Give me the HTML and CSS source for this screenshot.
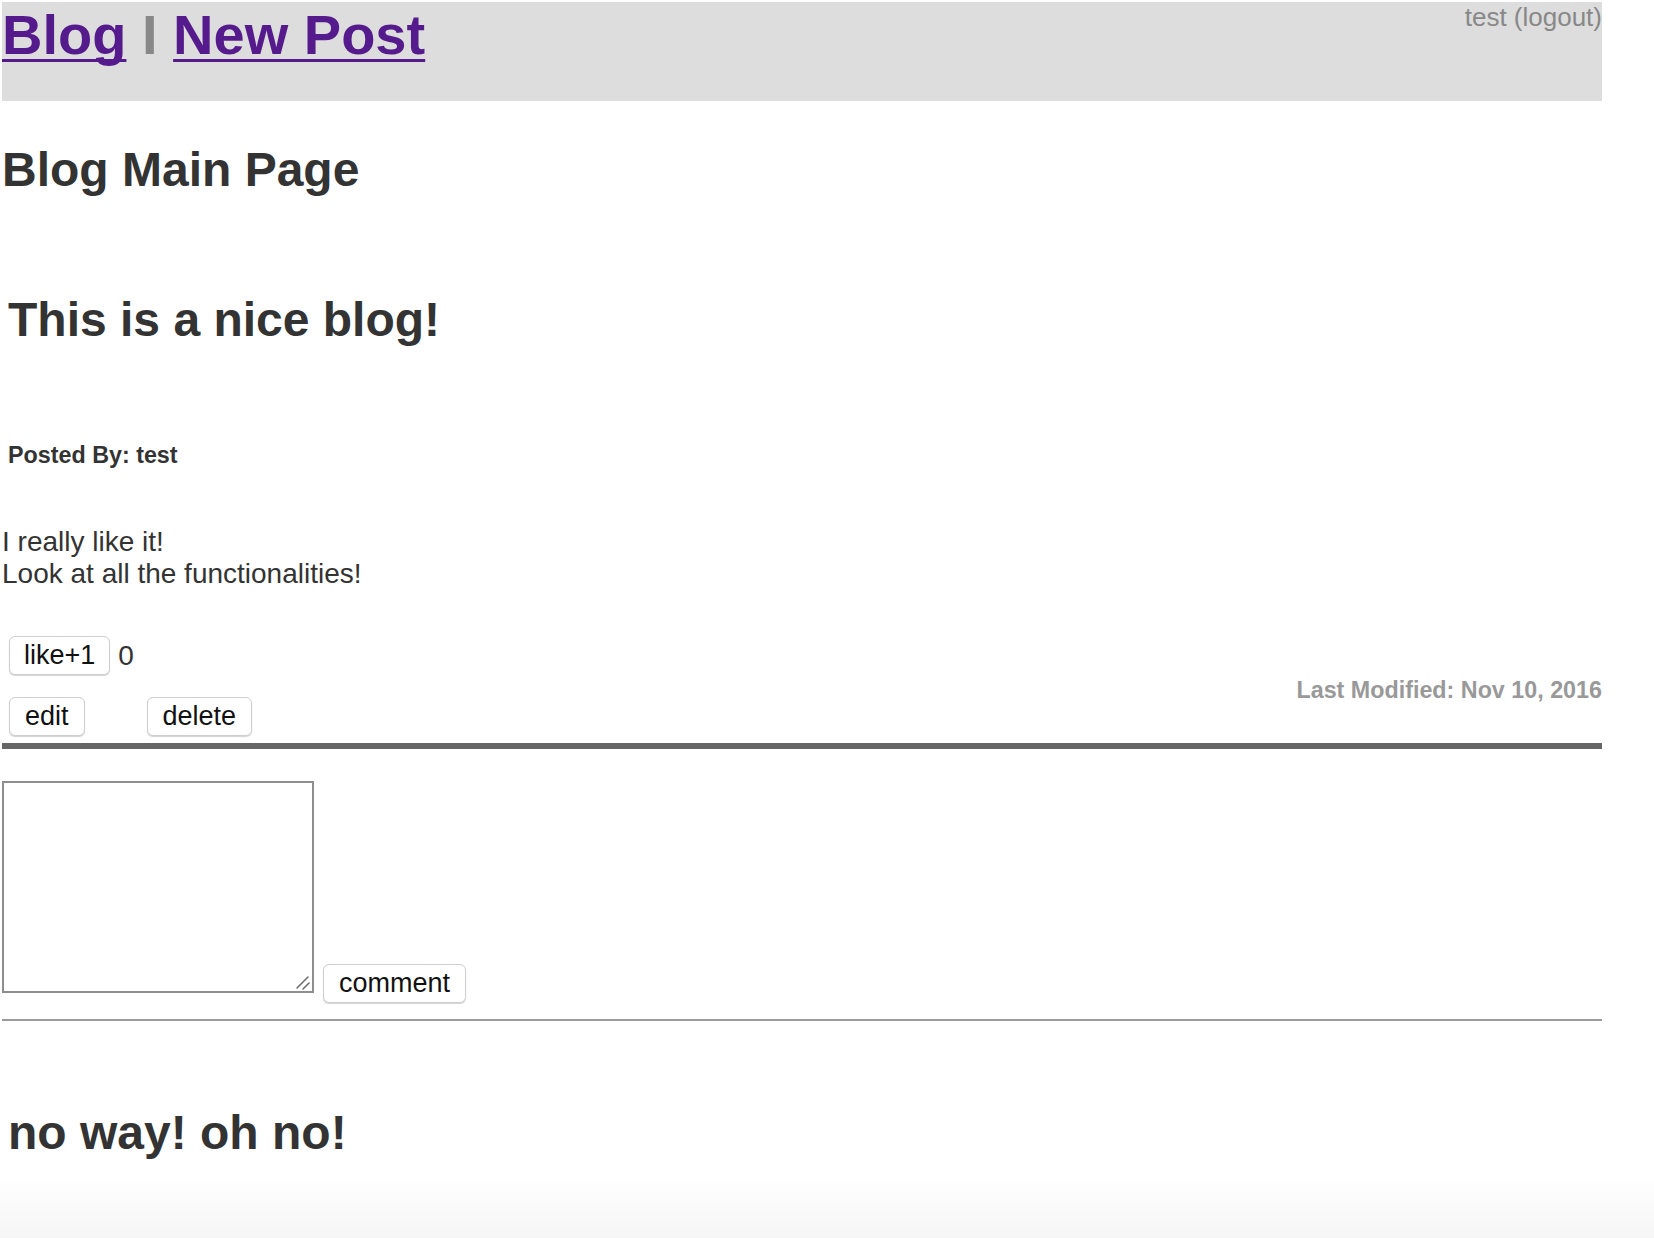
FILE: index.html
```html
<!DOCTYPE html>
<html lang="en">
<head>
<meta charset="utf-8">
<title>Blog Main Page</title>
<link rel="stylesheet" href="styles.css">
</head>
<body>
<div class="page">
  <header class="topbar">
    <h1 class="nav"><a href="#" class="nav-link">Blog</a> <span class="nav-sep">I</span> <a href="#" class="nav-link">New Post</a></h1>
    <div class="user">test (logout)</div>
  </header>

  <h2 class="page-title">Blog Main Page</h2>

  <article class="post">
    <h2 class="post-title">This is a nice blog!</h2>
    <div class="author">Posted By: test</div>
    <div class="post-body">I really like it!<br>Look at all the functionalities!</div>

    <div class="post-actions">
      <div class="action-col">
        <div class="like-row">
          <button class="btn">like+1</button>
          <span class="like-count">0</span>
        </div>
        <div class="edit-row">
          <button class="btn btn-edit">edit</button>
          <button class="btn btn-delete">delete</button>
        </div>
      </div>
      <div class="modified">Last Modified: Nov 10, 2016</div>
    </div>
    <div class="thick-rule"></div>

    <form class="comment-form">
      <div class="box-wrap">
        <textarea class="comment-box"></textarea>
        <svg class="grip" width="16" height="16" viewBox="0 0 16 16" aria-hidden="true">
          <line x1="2" y1="14" x2="13" y2="3" stroke="#6f6f6f" stroke-width="1.6" stroke-linecap="round"/>
          <line x1="8" y1="15" x2="14" y2="9" stroke="#6f6f6f" stroke-width="1.6" stroke-linecap="round"/>
        </svg>
      </div>
      <button type="button" class="btn btn-comment">comment</button>
    </form>
    <div class="thin-rule"></div>

    <h2 class="comment-title">no way! oh no!</h2>
  </article>
</div>
<div class="bottom-fade"></div>
</body>
</html>
```

FILE: styles.css
```css
html, body {
  margin: 0;
  padding: 0;
  background: #ffffff;
}

body {
  font-family: "Liberation Sans", Arial, Helvetica, sans-serif;
  color: #333333;
}

.page {
  width: 1600px;
  padding: 2px 0 0 2px;
}

.topbar {
  height: 99px;
  background: #dddddd;
  display: flex;
  justify-content: space-between;
  align-items: flex-start;
}

.nav {
  margin: 0;
  font-size: 56px;
  font-weight: 700;
  line-height: normal;
  color: #888888;
}

.nav-link {
  color: #551a8b;
  text-decoration: underline;
  text-decoration-thickness: 3px;
  text-underline-offset: 5px;
  text-decoration-skip-ink: none;
}

.nav-sep {
  color: #888888;
}

.user {
  font-size: 26px;
  line-height: normal;
  color: #888888;
}

.page-title,
.post-title,
.comment-title {
  font-size: 48px;
  font-weight: 700;
  line-height: 54px;
  color: #333333;
}

.page-title {
  margin: 42px 0 0 0;
}

.post-title {
  margin: 96px 0 0 0;
  padding-left: 6px;
}

.author {
  margin-top: 95px;
  padding-left: 6px;
  font-size: 23.3px;
  font-weight: 700;
  line-height: normal;
}

.post-body {
  margin-top: 57px;
  font-size: 28px;
  line-height: 32px;
}

.post-actions {
  margin-top: 46px;
  display: flex;
  justify-content: space-between;
  align-items: flex-start;
}

.action-col {
  display: flex;
  flex-direction: column;
  gap: 22px;
  padding-left: 7px;
}

.like-row {
  display: flex;
  align-items: center;
  gap: 8px;
}

.like-count {
  font-size: 28px;
  color: #333333;
}

.edit-row {
  display: flex;
  align-items: center;
  gap: 62px;
}

.btn {
  height: 39px;
  padding: 0 14px;
  font-family: "Liberation Sans", Arial, Helvetica, sans-serif;
  font-size: 27px;
  line-height: 37px;
  color: #111111;
  background: #ffffff;
  border: 1px solid #cfcfcf;
  border-radius: 6px;
  box-shadow: 0 1px 1px rgba(0, 0, 0, 0.18);
}

.btn-edit {
  padding: 0 15px;
}

.btn-delete {
  padding: 0 15px;
}

.modified {
  margin-top: 41px;
  font-size: 23.3px;
  font-weight: 700;
  line-height: normal;
  color: #999999;
}

.thick-rule {
  margin-top: 7px;
  height: 6px;
  background: #666666;
}

.comment-form {
  margin: 32px 0 0 0;
  display: flex;
  align-items: flex-end;
}

.box-wrap {
  position: relative;
  width: 312px;
  height: 212px;
}

.comment-box {
  display: block;
  box-sizing: border-box;
  width: 312px;
  height: 212px;
  margin: 0;
  border: 2px solid #8e8e8e;
  background: #ffffff;
  resize: none;
}

.grip {
  position: absolute;
  right: 3px;
  bottom: 3px;
}

.btn-comment {
  margin-left: 9px;
  margin-bottom: -10px;
  padding: 0 15px;
}

.thin-rule {
  margin-top: 26px;
  height: 2px;
  background: #9c9c9c;
}

.comment-title {
  margin: 85px 0 0 0;
  padding-left: 6px;
}

.bottom-fade {
  position: fixed;
  left: 0;
  right: 0;
  bottom: 0;
  height: 64px;
  pointer-events: none;
  background: linear-gradient(to bottom, rgba(0, 0, 0, 0), rgba(0, 0, 0, 0.035));
}
```
